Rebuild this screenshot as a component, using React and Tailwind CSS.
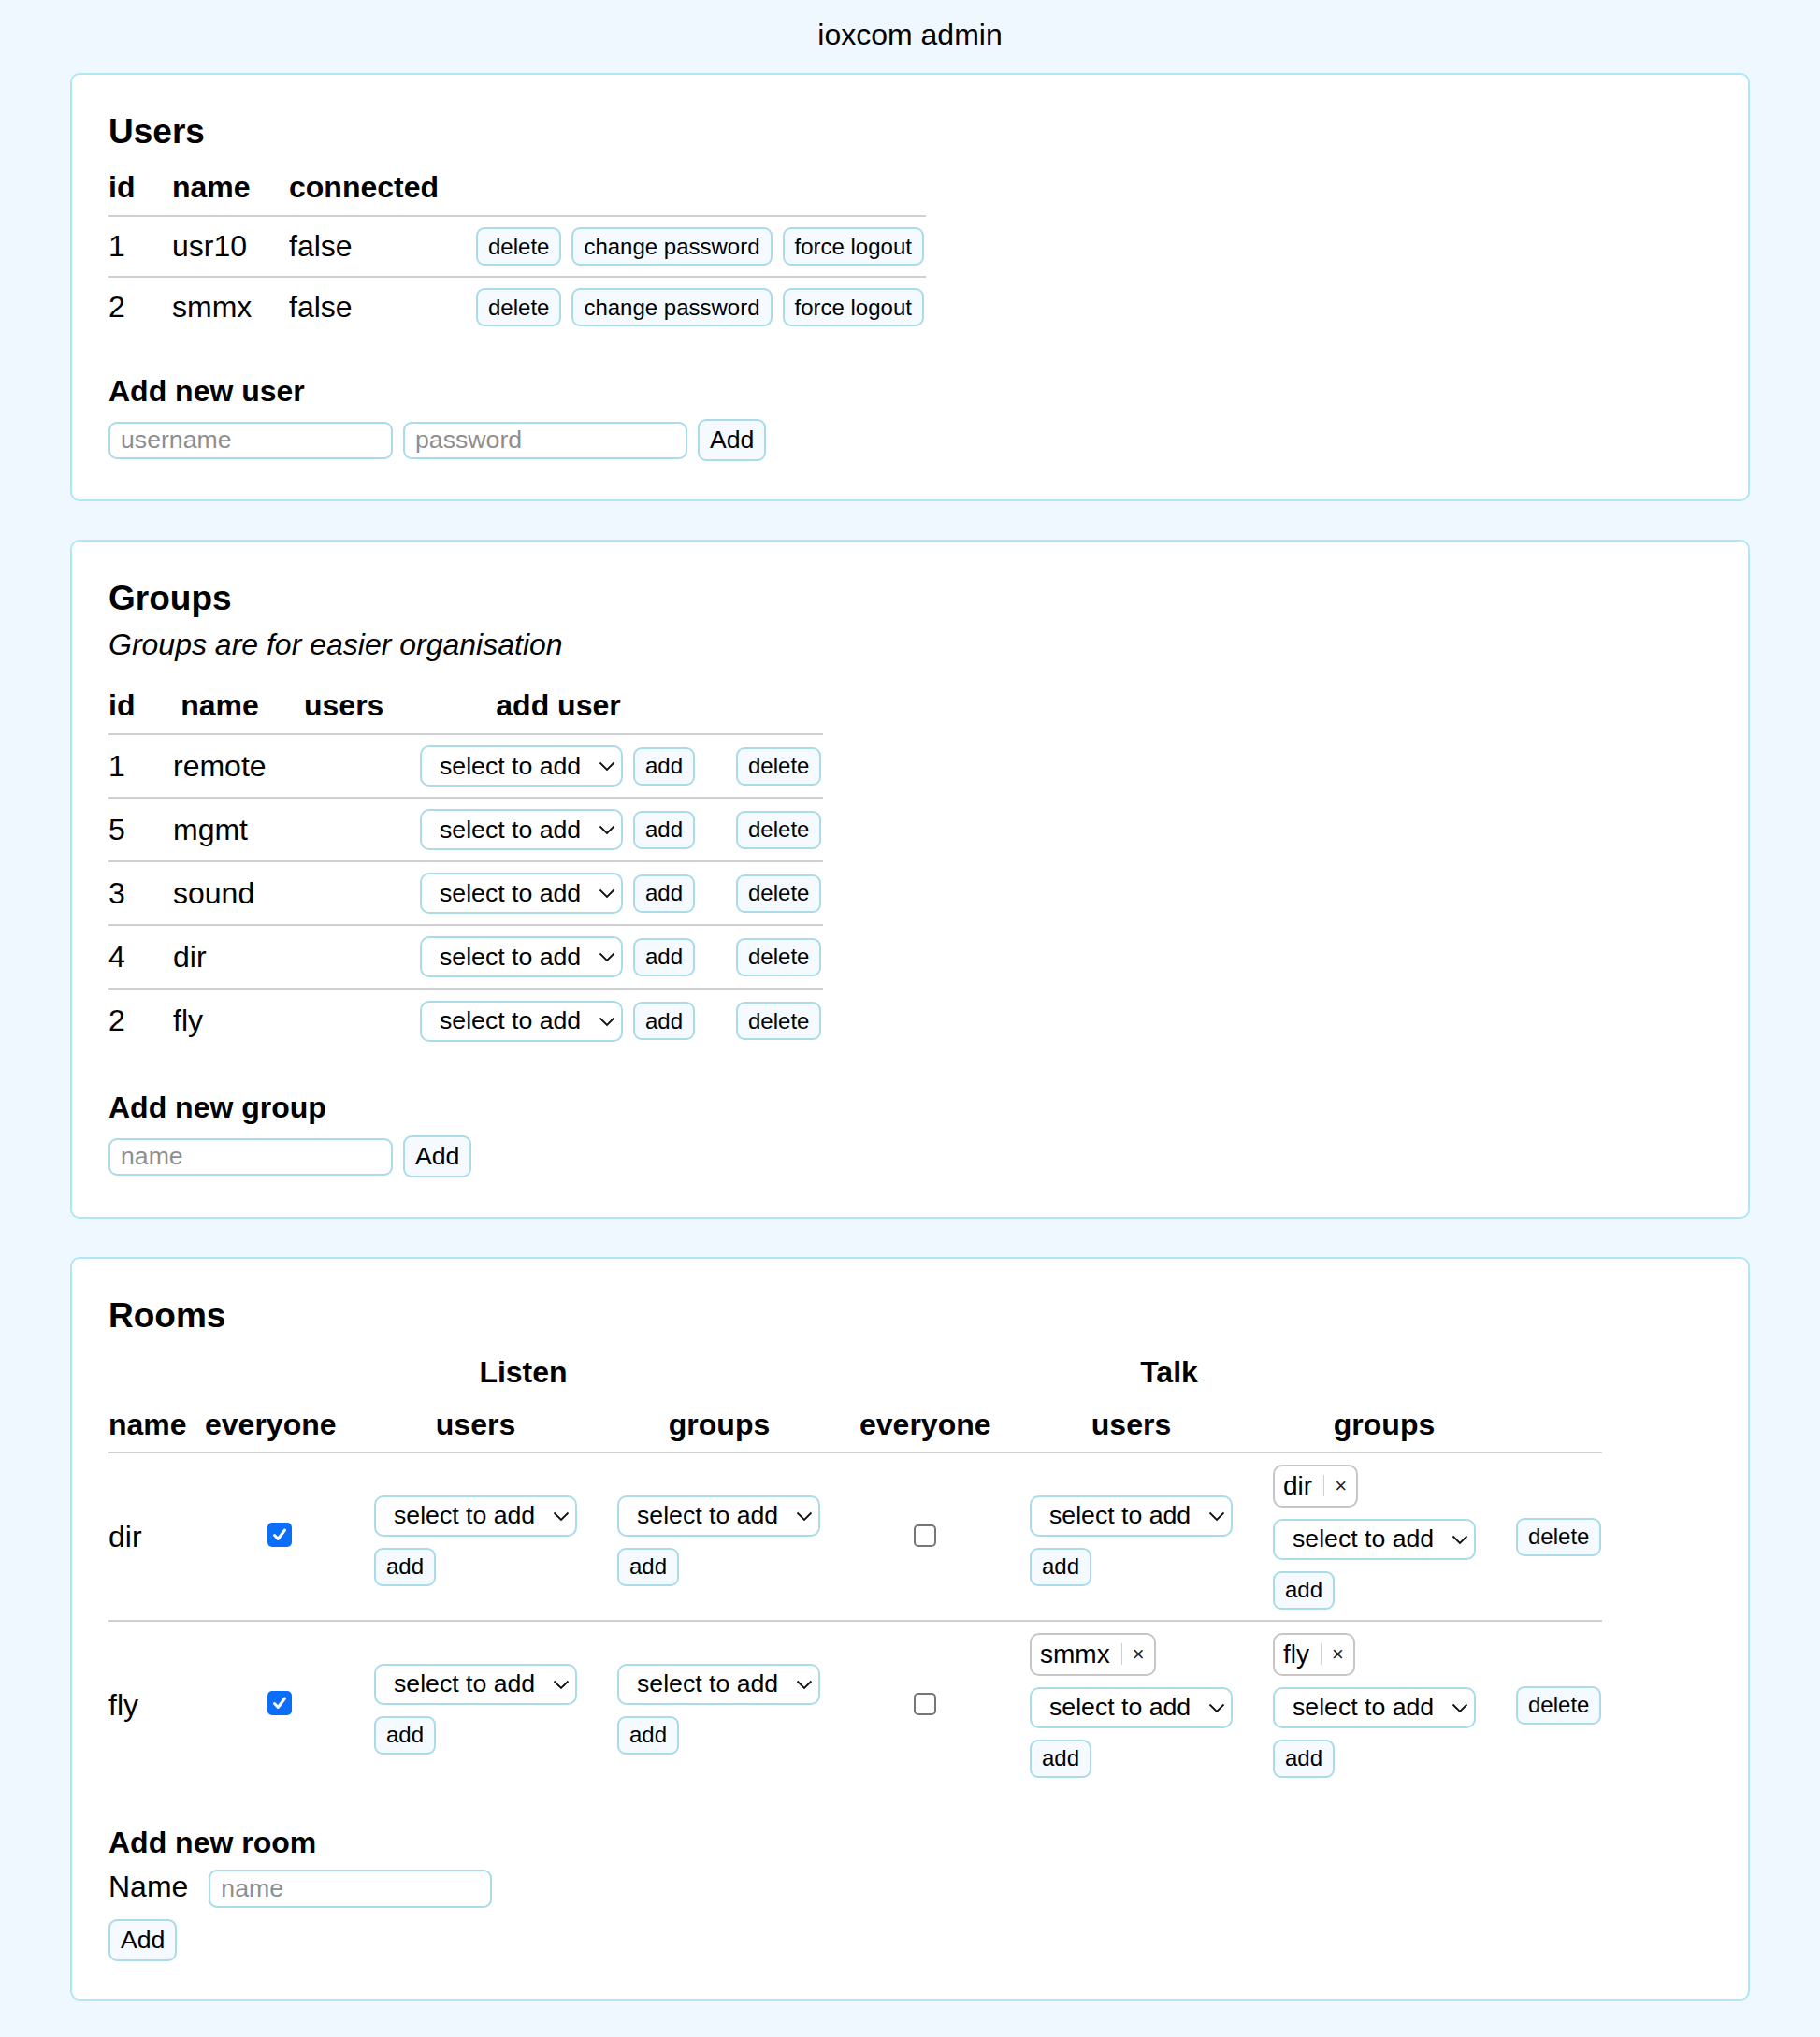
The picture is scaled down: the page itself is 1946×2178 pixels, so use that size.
import React from 'react';

const users = [
    { id: 1, name: 'usr10', connected: 'false' },
    { id: 2, name: 'smmx', connected: 'false' }
];

const groups = [
    { id: 1, name: 'remote' },
    { id: 5, name: 'mgmt' },
    { id: 3, name: 'sound' },
    { id: 4, name: 'dir' },
    { id: 2, name: 'fly' }
];

const rooms = [
    { name: 'dir', listenAll: true, talkAll: false, talkUsers: [], talkGroups: ['dir'] },
    { name: 'fly', listenAll: true, talkAll: false, talkUsers: ['smmx'], talkGroups: ['fly'] }
];

const SmallButton = ({ children }) => (
    <button className="h-[41px] px-[11px] border-2 border-[#a9dbe8] rounded-[9px] bg-[#f4faff] text-[24px] leading-none text-black">
        {children}
    </button>
);

const BigButton = ({ children }) => (
    <button className="h-[45px] px-[11px] border-2 border-[#a9dbe8] rounded-[9px] bg-[#f4faff] text-[26.67px] leading-none text-black">
        {children}
    </button>
);

const TextInput = ({ placeholder }) => (
    <input
        type="text"
        placeholder={placeholder}
        className="w-[304px] h-[40px] border-2 border-[#a9dbe8] rounded-[9px] bg-white pl-[11px] text-[26.67px] text-black placeholder:text-[#8e8e8e] outline-none"
    />
);

const SelectToAdd = () => (
    <div className="relative w-[217px] h-[44px] shrink-0">
        <select className="appearance-none w-full h-full border-2 border-[#a9dbe8] rounded-[10px] bg-white pl-[19px] text-[26.67px] text-black outline-none">
            <option>select to add</option>
        </select>
        <svg className="absolute right-[8px] top-[17px] pointer-events-none" width="18" height="11" viewBox="0 0 18 11">
            <path d="M1.5 1.5 L9 9 L16.5 1.5" fill="none" stroke="#111" strokeWidth="1.8" />
        </svg>
    </div>
);

const Chip = ({ label }) => (
    <div className="flex items-center h-[46px] border-2 border-[#c6c6c6] rounded-[10px] bg-white pl-[9px] pr-[10px] self-start">
        <span className="text-[28px] leading-none">{label}</span>
        <span className="w-px h-[23px] bg-[#cfcfcf] ml-[12px] mr-[11px]"></span>
        <span className="text-[22px] leading-none text-[#222]">×</span>
    </div>
);

const CheckBox = ({ checked }) =>
    checked ? (
        <span className="flex items-center justify-center w-[26px] h-[26px] rounded-[5px] bg-[#0b6ef8]">
            <svg width="18" height="18" viewBox="0 0 18 18">
                <path d="M3.5 9.5 L7.3 13.5 L14.5 4" fill="none" stroke="white" strokeWidth="3" strokeLinecap="round" strokeLinejoin="round" />
            </svg>
        </span>
    ) : (
        <span className="block w-[24px] h-[24px] rounded-[5px] border-2 border-[#767676] bg-white"></span>
    );

const Card = ({ children, pb }) => (
    <div className={`mx-[75px] bg-white border-2 border-[#aee7f5] rounded-[10px] pl-[39px] pt-[40px] ${pb}`}>
        {children}
    </div>
);

const Heading = ({ children }) => (
    <h3 className="text-[37px] leading-[42px] font-bold">{children}</h3>
);

const SubHeading = ({ children, mt }) => (
    <h4 className={`text-[32px] leading-[37px] font-bold ${mt}`}>{children}</h4>
);

const UsersCard = () => (
    <Card pb="pb-[41px]">
        <Heading>Users</Heading>
        <div className="w-[874px] mt-[20px]">
            <div className="flex text-[32px] leading-[37px] font-bold pb-[11px] border-b-2 border-[#d0d0d0]">
                <div className="w-[68px]">id</div>
                <div className="w-[125px]">name</div>
                <div className="w-[200px]">connected</div>
            </div>
            {users.map((u, i) => (
                <div
                    key={u.id}
                    className={`flex items-center text-[32px] leading-[37px] ${i < users.length - 1 ? 'h-[65px] border-b-2 border-[#d0d0d0]' : 'h-[63px]'}`}
                >
                    <div className="w-[68px]">{u.id}</div>
                    <div className="w-[125px]">{u.name}</div>
                    <div className="w-[200px]">{u.connected}</div>
                    <div className="flex gap-[11px]">
                        <SmallButton>delete</SmallButton>
                        <SmallButton>change password</SmallButton>
                        <SmallButton>force logout</SmallButton>
                    </div>
                </div>
            ))}
        </div>
        <SubHeading mt="mt-[40px]">Add new user</SubHeading>
        <div className="flex items-center gap-[11px] mt-[11px]">
            <TextInput placeholder="username" />
            <TextInput placeholder="password" />
            <BigButton>Add</BigButton>
        </div>
    </Card>
);

const GroupsCard = () => (
    <Card pb="pb-[42px]">
        <Heading>Groups</Heading>
        <p className="italic text-[32px] leading-[37px] mt-[10px]">Groups are for easier organisation</p>
        <div className="w-[764px] mt-[28px]">
            <div className="flex text-[32px] leading-[37px] font-bold pb-[11px] border-b-2 border-[#d0d0d0]">
                <div className="w-[69px]">id</div>
                <div className="w-[140px]">
                    <div className="w-[100px] text-center">name</div>
                </div>
                <div className="w-[124px]">users</div>
                <div className="w-[338px]">
                    <div className="w-[296px] text-center">add user</div>
                </div>
            </div>
            {groups.map((g, i) => (
                <div
                    key={g.id}
                    className={`flex items-center text-[32px] leading-[37px] ${i < groups.length - 1 ? 'h-[68px] border-b-2 border-[#d0d0d0]' : 'h-[67px]'}`}
                >
                    <div className="w-[69px]">{g.id}</div>
                    <div className="w-[140px]">{g.name}</div>
                    <div className="w-[124px]"></div>
                    <div className="w-[338px] flex items-center gap-[11px]">
                        <SelectToAdd />
                        <SmallButton>add</SmallButton>
                    </div>
                    <SmallButton>delete</SmallButton>
                </div>
            ))}
        </div>
        <SubHeading mt="mt-[41px]">Add new group</SubHeading>
        <div className="flex items-center gap-[11px] mt-[11px]">
            <TextInput placeholder="name" />
            <BigButton>Add</BigButton>
        </div>
    </Card>
);

const AddStack = ({ chips = [], pad = false }) => (
    <div className={`flex flex-col items-start gap-[12px] ${pad ? 'pt-[8px]' : ''}`}>
        {chips.map((c) => (
            <Chip key={c} label={c} />
        ))}
        <SelectToAdd />
        <SmallButton>add</SmallButton>
    </div>
);

const RoomsCard = () => (
    <Card pb="pb-[40px]">
        <Heading>Rooms</Heading>
        <div className="w-[1597px]">
            <div className="flex text-[32px] leading-[37px] font-bold mt-[21px]">
                <div className="w-[103px]"></div>
                <div className="w-[681px] text-center">Listen</div>
                <div className="w-[700px] text-center">Talk</div>
            </div>
            <div className="flex text-[32px] leading-[37px] font-bold mt-[19px] pb-[10px] border-b-2 border-[#d0d0d0]">
                <div className="w-[103px]">name</div>
                <div className="w-[181px]">everyone</div>
                <div className="w-[260px]">
                    <div className="w-[217px] text-center">users</div>
                </div>
                <div className="w-[259px]">
                    <div className="w-[218px] text-center">groups</div>
                </div>
                <div className="w-[182px]">everyone</div>
                <div className="w-[260px]">
                    <div className="w-[217px] text-center">users</div>
                </div>
                <div className="w-[260px]">
                    <div className="w-[238px] text-center">groups</div>
                </div>
            </div>
            {rooms.map((r, i) => (
                <div
                    key={r.name}
                    className={`flex items-center text-[32px] leading-[37px] ${i < rooms.length - 1 ? 'h-[180px] border-b-2 border-[#d0d0d0]' : 'h-[178px]'}`}
                >
                    <div className="w-[103px]">{r.name}</div>
                    <div className="w-[181px] pl-[67px] pb-[5px]">
                        <CheckBox checked={r.listenAll} />
                    </div>
                    <div className="w-[260px]">
                        <AddStack pad />
                    </div>
                    <div className="w-[259px]">
                        <AddStack pad />
                    </div>
                    <div className="w-[182px] pl-[58px] pb-[3px]">
                        <CheckBox checked={r.talkAll} />
                    </div>
                    <div className="w-[260px]">
                        <AddStack chips={r.talkUsers} pad={r.talkUsers.length === 0} />
                    </div>
                    <div className="w-[260px]">
                        <AddStack chips={r.talkGroups} pad={r.talkGroups.length === 0} />
                    </div>
                    <div className="w-[92px]">
                        <SmallButton>delete</SmallButton>
                    </div>
                </div>
            ))}
        </div>
        <SubHeading mt="mt-[40px]">Add new room</SubHeading>
        <div className="flex items-baseline mt-[10px]">
            <span className="text-[32px] leading-[37px]">Name</span>
            <input
                type="text"
                placeholder="name"
                className="ml-[22px] w-[303px] h-[41px] border-2 border-[#a9dbe8] rounded-[9px] bg-white pl-[11px] text-[26.67px] text-black placeholder:text-[#8e8e8e] outline-none"
            />
        </div>
        <div className="mt-[12px]">
            <BigButton>Add</BigButton>
        </div>
    </Card>
);

export default function App() {
    return (
        <div className="min-h-screen bg-[#f0f8ff] text-black font-['Liberation_Sans',Arial,sans-serif] pb-[40px]">
            <div className="text-center text-[32px] leading-[37px] pt-[19px] pb-[22px]">ioxcom admin</div>
            <div className="flex flex-col gap-[41px]">
                <UsersCard />
                <GroupsCard />
                <RoomsCard />
            </div>
        </div>
    );
}
